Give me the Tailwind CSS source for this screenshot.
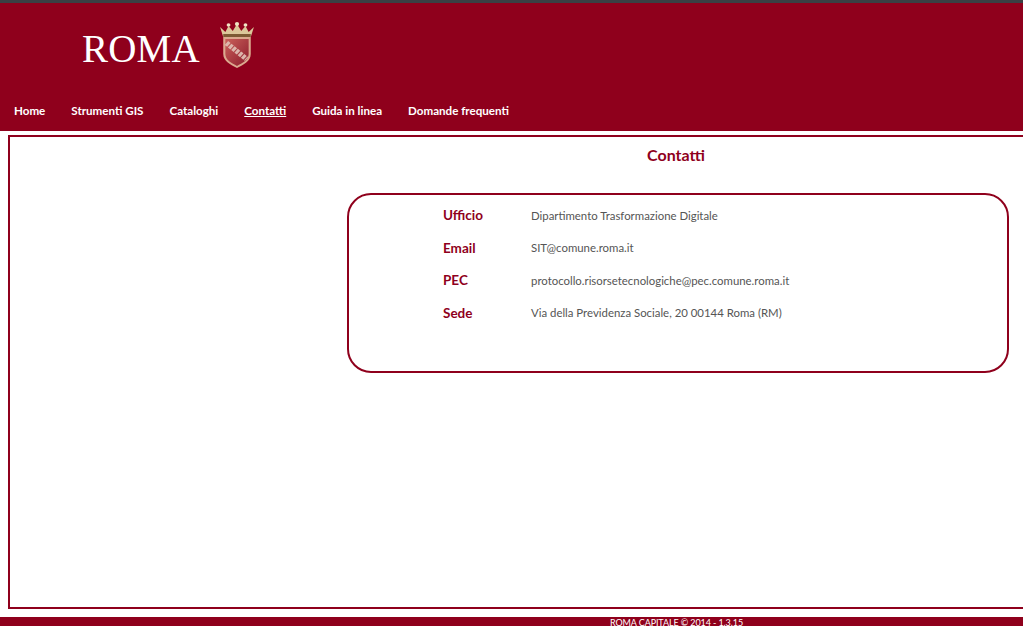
<!DOCTYPE html>
<html lang="it">
<head>
  <meta charset="UTF-8" />
  <title>Contatti</title>
  <script src="https://cdn.jsdelivr.net/npm/@tailwindcss/browser@4"></script>
</head>
<body class="h-[626px] overflow-hidden bg-white font-['Lato',sans-serif]">
  <div class="h-[3px] bg-[#3a4044]"></div>
  <header class="h-[128px] bg-[#8f001c]">
    <div class="flex h-[100px] items-start pl-[82px] pt-[25px]">
      <span class="font-['Liberation_Serif',serif] text-[39px] leading-[42px] tracking-[0.2px] text-white">ROMA</span>
      <svg class="ml-[19px] mt-[-6px]" width="36" height="46" viewBox="0 0 34 46" preserveAspectRatio="none">
        <defs>
          <linearGradient id="shield" x1="0" y1="0" x2="1" y2="1">
            <stop offset="0" stop-color="#c9605a"/>
            <stop offset="1" stop-color="#8c1c2c"/>
          </linearGradient>
        </defs>
        <path d="M1 5l5 5 3-6 4 5 4-7 4 7 4-5 3 6 5-5-3 10H4z" fill="#dcc79a"/>
        <circle cx="9" cy="3" r="1.8" fill="#f0e4c4"/>
        <circle cx="17" cy="2" r="2" fill="#f0e4c4"/>
        <circle cx="25" cy="3" r="1.8" fill="#f0e4c4"/>
        <path d="M4 12h26v3H4z" fill="#7d5a34"/>
        <path d="M4 15h26v17c0 7-7 11-13 14C11 43 4 39 4 32z" fill="#dba98f"/>
        <path d="M6 17h22v15c0 6-6 9-11 12C12 41 6 38 6 32z" fill="url(#shield)"/>
        <path d="M7 21l19 16" stroke="#dcb6ac" stroke-width="5" stroke-dasharray="3 1"/>
      </svg>
    </div>
    <nav class="flex gap-[26px] pl-[14px] text-[11.6px] leading-[16px] font-bold text-white">
      <a>Home</a>
      <a>Strumenti GIS</a>
      <a>Cataloghi</a>
      <a class="underline">Contatti</a>
      <a>Guida in linea</a>
      <a>Domande frequenti</a>
    </nav>
  </header>
  <main class="ml-[8px] mr-[-20px] mt-[4px] flex h-[474px] border-2 border-[#8f001c] pl-[337px]">
    <section class="w-[662px]">
      <h1 class="mt-[8px] pr-[4px] text-center text-[16px] leading-[20px] font-bold text-[#8f001c]">Contatti</h1>
      <div class="mt-[28px] h-[180px] rounded-[24px] border-2 border-[#8f001c] pl-[94px] pt-[4px] text-[11.4px] text-[#555]">
        <div class="flex h-[33px] items-center"><b class="w-[88px] text-[13.5px] text-[#8f001c]">Ufficio</b><span>Dipartimento Trasformazione Digitale</span></div>
        <div class="flex h-[32px] items-center"><b class="w-[88px] text-[13.5px] text-[#8f001c]">Email</b><span>SIT@comune.roma.it</span></div>
        <div class="flex h-[33px] items-center"><b class="w-[88px] text-[13.5px] text-[#8f001c]">PEC</b><span>protocollo.risorsetecnologiche@pec.comune.roma.it</span></div>
        <div class="flex h-[32px] items-center"><b class="w-[88px] text-[13.5px] text-[#8f001c]">Sede</b><span>Via della Previdenza Sociale, 20 00144 Roma (RM)</span></div>
      </div>
    </section>
  </main>
  <footer class="mt-[8px] h-[20px] bg-[#8f001c] pl-[610px] pt-[1px] text-[9px] leading-[10px] tracking-[-0.1px] text-white">ROMA CAPITALE © 2014 - 1.3.15</footer>
</body>
</html>
